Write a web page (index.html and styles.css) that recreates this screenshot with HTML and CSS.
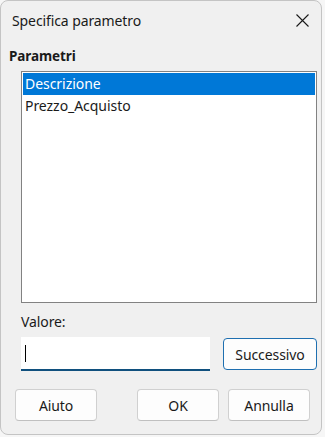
FILE: index.html
```html
<!DOCTYPE html>
<html lang="it">
<head>
<meta charset="utf-8">
<title>Specifica parametro</title>
<link rel="stylesheet" href="styles.css">
</head>
<body>
<div class="dialog">
  <div class="titlebar">
    <span class="title">Specifica parametro</span>
    <svg class="close" width="13" height="13" viewBox="0 0 13 13"><path d="M0.5 0.5L12.5 12.5M12.5 0.5L0.5 12.5" stroke="#1a1a1a" stroke-width="1.1" fill="none"/></svg>
  </div>
  <div class="section-label">Parametri</div>
  <div class="listbox">
    <div class="item selected">Descrizione</div>
    <div class="item">Prezzo_Acquisto</div>
  </div>
  <div class="value-label">Valore:</div>
  <div class="value-row">
    <div class="input"><span class="caret"></span></div>
    <button class="btn btn-default">Successivo</button>
  </div>
  <div class="footer">
    <button class="btn">Aiuto</button>
    <div class="footer-right">
      <button class="btn">OK</button>
      <button class="btn">Annulla</button>
    </div>
  </div>
</div>
</body>
</html>
```
FILE: styles.css
```css
html, body {
  margin: 0;
  padding: 0;
  background: #f6f6f6;
}
body {
  font-family: "Noto Sans", "Open Sans", "Liberation Sans", sans-serif;
  color: #1a1a1a;
}
.dialog {
  box-sizing: border-box;
  width: 322px;
  height: 435px;
  background: #f0f0f0;
  border: 1px solid #c4c4c4;
  border-radius: 8px;
  display: flex;
  flex-direction: column;
  overflow: hidden;
}
.titlebar {
  height: 38px;
  display: flex;
  align-items: center;
  justify-content: space-between;
  padding: 0 12px 0 11px;
  flex-shrink: 0;
}
.title {
  font-size: 14px;
  letter-spacing: -0.1px;
}
.close {
  display: block;
}
.section-label {
  font-weight: 700;
  font-size: 13.5px;
  margin: 7px 0 0 8px;
  height: 20px;
  line-height: 20px;
  letter-spacing: -0.1px;
}
.listbox {
  box-sizing: border-box;
  margin: 5px 0 0 20px;
  width: 296px;
  height: 232px;
  background: #fff;
  border: 1px solid #828282;
  padding: 1px;
}
.item {
  height: 22px;
  line-height: 22px;
  padding-left: 2px;
  font-size: 14px;
  letter-spacing: -0.05px;
}
.item.selected {
  background: #0078d7;
  color: #fff;
}
.value-label {
  margin: 9px 0 0 20px;
  font-size: 14px;
  height: 20px;
  line-height: 20px;
  letter-spacing: -0.1px;
}
.value-row {
  display: flex;
  align-items: flex-start;
  margin: 5px 0 0 20px;
  gap: 13px;
}
.input {
  box-sizing: border-box;
  width: 189px;
  height: 34px;
  background: #fff;
  border-bottom: 2px solid #10507e;
  display: flex;
  align-items: center;
  padding-left: 4px;
}
.caret {
  width: 1px;
  height: 17px;
  background: #000;
}
.btn {
  box-sizing: border-box;
  width: 82px;
  height: 32px;
  font-family: inherit;
  font-size: 14px;
  color: #1a1a1a;
  background: #fdfdfd;
  border: 1px solid #d0d0d0;
  border-bottom-color: #c0c0c0;
  border-radius: 4px;
  padding: 0;
  letter-spacing: -0.1px;
}
.btn-default {
  width: 94px;
  border: 1px solid #1e6fb0;
  margin-top: 1px;
}
.footer {
  display: flex;
  justify-content: space-between;
  margin: 18px 0 0 14px;
  width: 295px;
}
.footer-right {
  display: flex;
  gap: 9px;
}
```
